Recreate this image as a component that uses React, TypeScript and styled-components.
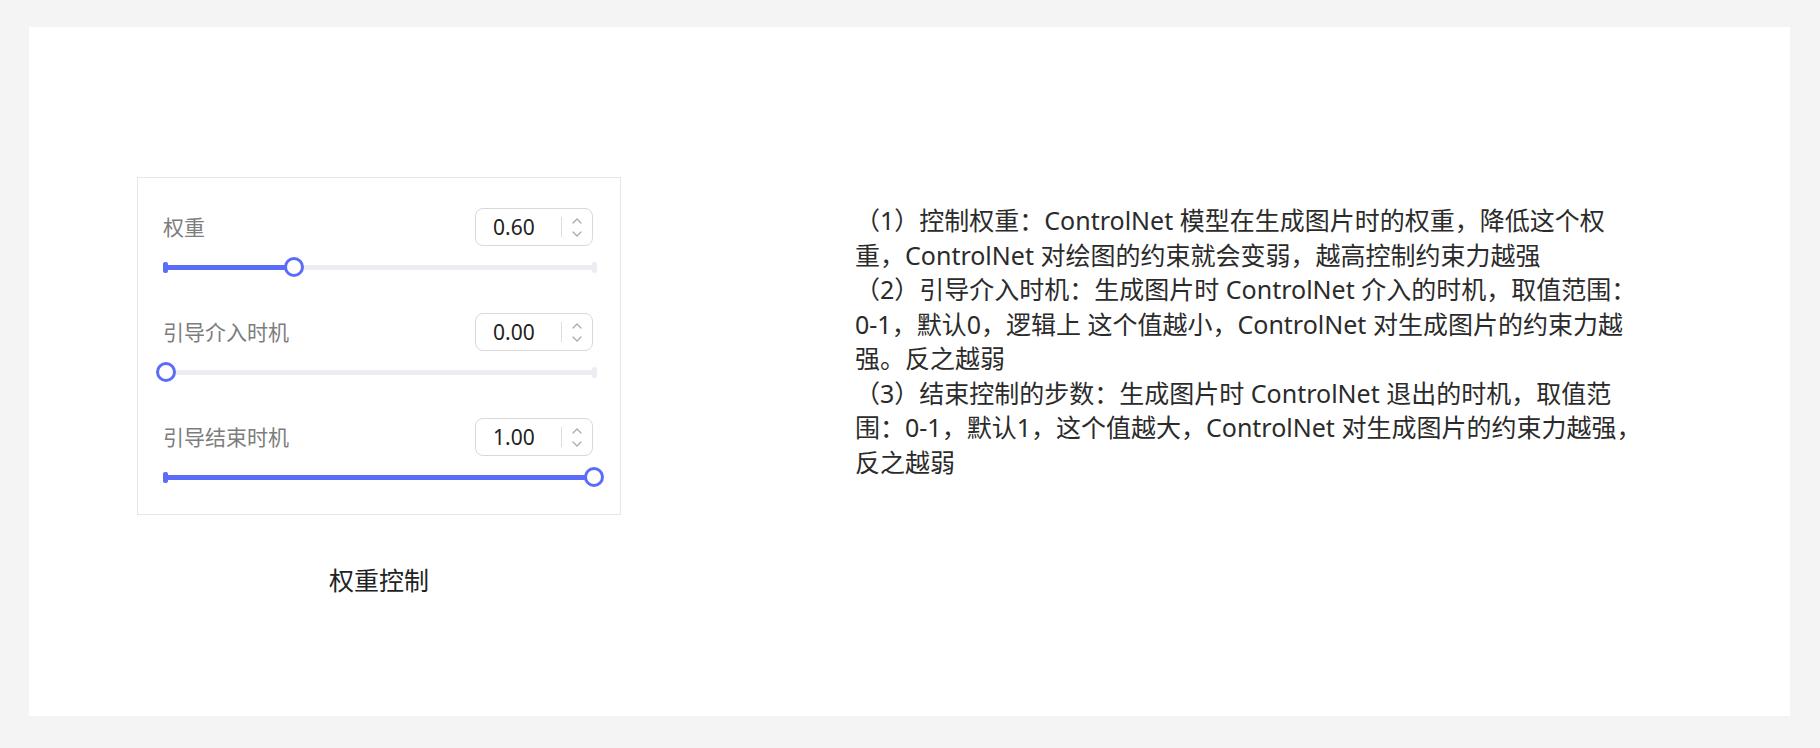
import React from 'react';
import styled, { createGlobalStyle } from 'styled-components';

const BLUE = '#5b6cf8';

const GlobalStyle = createGlobalStyle`
  html, body {
    margin: 0;
    padding: 0;
    background: #f4f4f4;
  }
  body {
    font-family: "Noto Sans", "Noto Sans CJK SC", sans-serif;
  }
`;

type Param = { label: string, value: string, pct: number };

const params: Param[] = [
  { label: '权重', value: '0.60', pct: 0.3 },
  { label: '引导介入时机', value: '0.00', pct: 0 },
  { label: '引导结束时机', value: '1.00', pct: 1 },
];

// each paragraph is kept with its own line breaks
const notes: string[][] = [
  [
    '（1）控制权重：ControlNet 模型在生成图片时的权重，降低这个权',
    '重，ControlNet 对绘图的约束就会变弱，越高控制约束力越强',
  ],
  [
    '（2）引导介入时机：生成图片时 ControlNet 介入的时机，取值范围：',
    '0-1，默认0，逻辑上 这个值越小，ControlNet 对生成图片的约束力越',
    '强。反之越弱',
  ],
  [
    '（3）结束控制的步数：生成图片时 ControlNet 退出的时机，取值范',
    '围：0-1，默认1，这个值越大，ControlNet 对生成图片的约束力越强，',
    '反之越弱',
  ],
];

const Chevron: React.FC<{ up?: boolean }> = ({ up = false }) => (
  <svg width="10" height="6" viewBox="0 0 10 6">
    <path
      d={up ? 'M1 5 L5 1 L9 5' : 'M1 1 L5 5 L9 1'}
      fill="none"
      stroke="#a8a8a8"
      strokeWidth="1.2"
      strokeLinecap="round"
      strokeLinejoin="round"
    />
  </svg>
);

const NumberInput: React.FC<{ value: string }> = ({ value }) => (
  <InputBox>
    <InputValue>{value}</InputValue>
    <Divider />
    <Stepper>
      <Chevron up />
      <Chevron />
    </Stepper>
  </InputBox>
);

const Slider: React.FC<{ pct: number }> = ({ pct }) => {
  const center = 3 + pct * 428;
  return (
    <Track>
      <Rail />
      <Fill style={{ width: center }} />
      <Cap side="left" active />
      <Cap side="right" active={false} />
      <Thumb style={{ left: center - 10 }} />
    </Track>
  );
};

const App: React.FC = () => (
  <Page>
    <GlobalStyle />
    <Card>
      <LeftColumn>
        <Panel>
          {params.map(p => (
            <Row key={p.label}>
              <RowHead>
                <Label>{p.label}</Label>
                <NumberInput value={p.value} />
              </RowHead>
              <Slider pct={p.pct} />
            </Row>
          ))}
        </Panel>
        <Caption>权重控制</Caption>
      </LeftColumn>
      <Notes>
        {notes.map((lines, i) => (
          <Paragraph key={i}>
            {lines.map(line => <Line key={line}>{line}</Line>)}
          </Paragraph>
        ))}
      </Notes>
    </Card>
  </Page>
);

const Page = styled.div`
  box-sizing: border-box;
  width: 1820px;
  height: 748px;
  padding: 27px 30px 32px 29px;
  background: #f4f4f4;
`;
const Card = styled.div`
  box-sizing: border-box;
  height: 100%;
  background: #ffffff;
  display: flex;
  align-items: flex-start;
  padding: 150px 0 0 108px;
`;
const LeftColumn = styled.div`
  width: 484px;
  display: flex;
  flex-direction: column;
  align-items: center;
`;
const Panel = styled.div`
  box-sizing: border-box;
  width: 484px;
  border: 1px solid #e6e6e6;
  padding: 30px 27px 27px 25px;
  display: flex;
  flex-direction: column;
  gap: 36px;
`;
const Row = styled.div`
  display: flex;
  flex-direction: column;
`;
const RowHead = styled.div`
  display: flex;
  align-items: center;
  justify-content: space-between;
`;
const Label = styled.span`
  font-family: "Noto Sans CJK SC", sans-serif;
  font-size: 21px;
  line-height: 28px;
  margin-top: -2px;
  color: #7d7d7d;
`;
const InputBox = styled.div`
  box-sizing: border-box;
  width: 118px;
  height: 38px;
  border: 1px solid #d9d9d9;
  border-radius: 8px;
  display: flex;
  align-items: center;
  padding-left: 17px;
`;
const InputValue = styled.span`
  width: 68px;
  font-family: "Noto Sans", sans-serif;
  font-size: 21px;
  color: #222222;
`;
const Divider = styled.div`
  width: 1px;
  height: 20px;
  background: #dddddd;
`;
const Stepper = styled.div`
  flex: 1;
  display: flex;
  flex-direction: column;
  align-items: center;
  gap: 7px;
`;
const Track = styled.div`
  position: relative;
  width: 434px;
  height: 20px;
  margin-top: 11px;
`;
const Rail = styled.div`
  position: absolute;
  left: 0;
  right: 0;
  top: 8px;
  height: 5px;
  background: #ececf2;
`;
const Fill = styled.div`
  position: absolute;
  left: 0;
  top: 8px;
  height: 5px;
  background: ${BLUE};
`;
const Cap = styled.div<{ side: 'left' | 'right', active: boolean }>`
  position: absolute;
  top: 5px;
  ${({ side }) => side}: 0;
  width: 5px;
  height: 11px;
  border-radius: 2px;
  background: ${({ active }) => active ? BLUE : '#ececf2'};
`;
const Thumb = styled.div`
  position: absolute;
  top: 0;
  box-sizing: border-box;
  width: 20px;
  height: 20px;
  border-radius: 50%;
  border: 3px solid ${BLUE};
  background: #ffffff;
`;
const Caption = styled.div`
  margin-top: 47px;
  font-family: "Noto Sans CJK SC", sans-serif;
  font-size: 25px;
  line-height: 34px;
  color: #222222;
`;
const Notes = styled.div`
  margin: 26px 0 0 234px;
  font-family: "Noto Sans", "Noto Sans CJK SC", sans-serif;
  font-size: 25px;
  line-height: 34.5px;
  color: #2b2b2b;
`;
const Paragraph = styled.div`
  display: flex;
  flex-direction: column;
`;
const Line = styled.span`
  white-space: nowrap;
`;

export default App;
